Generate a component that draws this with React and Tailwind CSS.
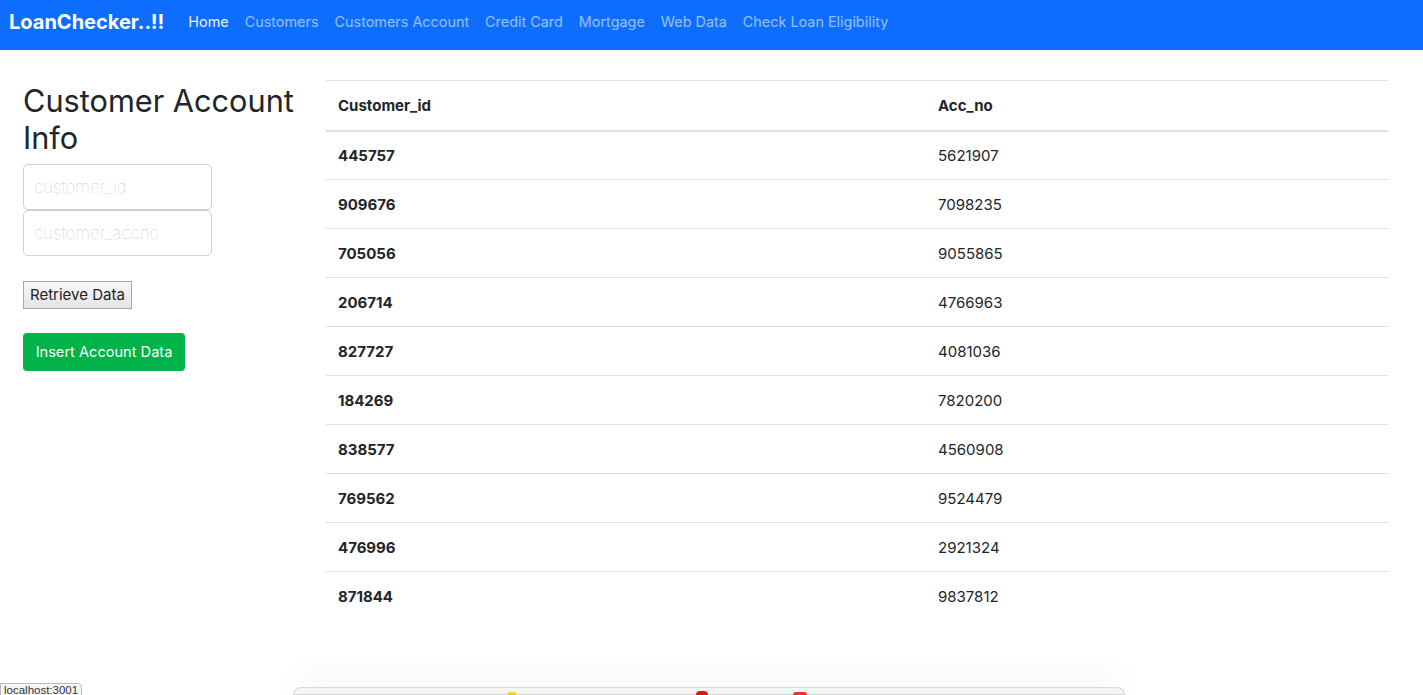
import React from "react";

const rows = [
  ["445757", "5621907"],
  ["909676", "7098235"],
  ["705056", "9055865"],
  ["206714", "4766963"],
  ["827727", "4081036"],
  ["184269", "7820200"],
  ["838577", "4560908"],
  ["769562", "9524479"],
  ["476996", "2921324"],
  ["871844", "9837812"],
];

const links = ["Customers", "Customers Account", "Credit Card", "Mortgage", "Web Data", "Check Loan Eligibility"];

export default function App() {
  return (
    <div className="relative min-h-[695px] overflow-hidden bg-white text-[#212529]" style={{ fontFamily: "Inter, 'Noto Sans', sans-serif" }}>
      <nav className="flex h-[50px] items-start bg-[#0d6efd] pl-[9px] pt-[10px]">
        <span className="mr-[24px] text-[20px] font-bold leading-[24px] text-white">LoanChecker..!!</span>
        <div className="flex gap-[16px] pt-[2px] text-[14.4px] leading-[20px]">
          <span className="text-white/90">Home</span>
          {links.map((l) => (
            <span key={l} className="text-white/55">{l}</span>
          ))}
        </div>
      </nav>
      <div className="flex pt-[30px]">
        <div className="w-[326px] shrink-0 pl-[23px] pr-[10px]">
          <h2 className="pt-[2px] text-[30.7px] font-normal leading-[37px]">Customer Account Info</h2>
          <div className="mt-[8px] flex flex-col">
            <input
              placeholder="customer_id"
              className="h-[46px] w-[189px] rounded-[5px] border border-[#d0d0d0] px-[10px] text-[17px] font-thin outline-none placeholder:text-[#c8c8c8]"
            />
            <input
              placeholder="customer_accno"
              className="h-[46px] w-[189px] rounded-[5px] border border-[#d0d0d0] px-[10px] text-[17px] font-thin outline-none placeholder:text-[#c8c8c8]"
            />
          </div>
          <button className="mt-[25px] h-[28px] border border-[#a8a8a8] bg-gradient-to-b from-[#f8f8f8] to-[#e4e4e4] px-[6px] text-[15px] text-[#222]">
            Retrieve Data
          </button>
          <div>
            <button className="mt-[24px] h-[38px] w-[162px] rounded-[4px] bg-[#00b247] pt-[2px] text-[14.6px] text-white">
              Insert Account Data
            </button>
          </div>
        </div>
        <div className="w-[1062px]">
          <table className="w-full border-collapse text-left text-[15px]">
            <thead>
              <tr className="h-[50px] border-t border-b-2 border-t-[#dee2e6] border-b-[#dee2e6]">
                <th className="w-[600px] px-[12px] pt-[2px] font-bold">Customer_id</th>
                <th className="px-[12px] pt-[2px] font-bold">Acc_no</th>
              </tr>
            </thead>
            <tbody>
              {rows.map(([a, b], i) => (
                <tr key={a} className={`h-[49px] ${i < rows.length - 1 ? "border-b border-[#dee2e6]" : ""}`}>
                  <th className="px-[12px] pt-[2px] font-bold">{a}</th>
                  <td className="px-[12px] pt-[2px]">{b}</td>
                </tr>
              ))}
            </tbody>
          </table>
        </div>
      </div>

      <div className="absolute bottom-0 left-[293px] h-[8px] w-[832px] rounded-t-[8px] border border-[#d8d8d8] bg-[#f4f4f4] shadow-[0_-10px_30px_rgba(0,0,0,0.08)]">
        <span className="absolute left-[213px] top-[4px] h-[6px] w-[10px] rounded-full bg-[#f5d90a]"></span>
        <span className="absolute left-[402px] top-[3px] h-[8px] w-[12px] rounded-full bg-[#ee1111]"></span>
        <span className="absolute left-[499px] top-[4px] h-[6px] w-[14px] rounded-full bg-[#f03030]"></span>
      </div>
      <div className="absolute bottom-[-2px] left-0 h-[14px] rounded-tr-[4px] border border-[#bbb] bg-[#f7f7f7] px-[3px] text-[11.5px] leading-[12px] text-[#333]" style={{ fontFamily: "'Liberation Sans', sans-serif" }}>
        localhost:3001
      </div>
    </div>
  );
}
